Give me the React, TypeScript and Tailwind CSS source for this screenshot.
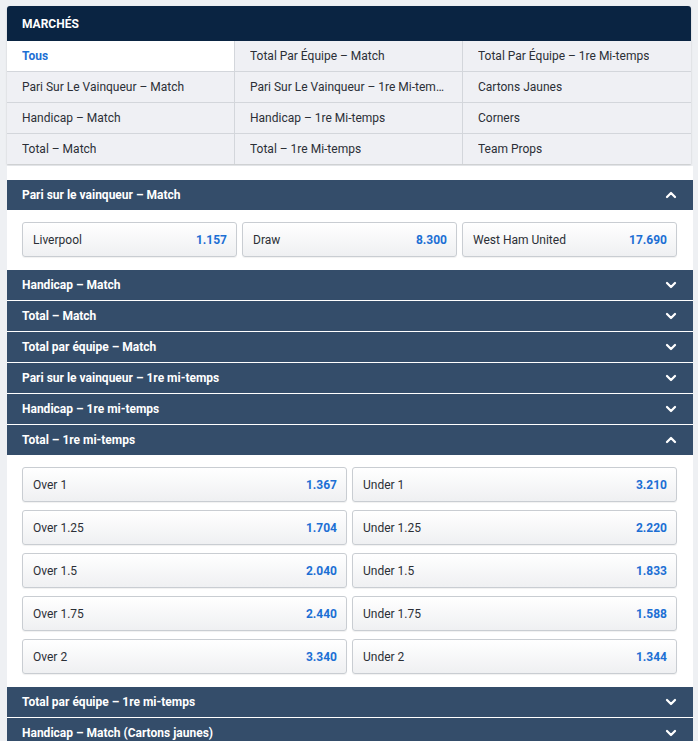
import React from 'react';
import { ChevronDown, ChevronUp } from 'lucide-react';

const marketTabs = [
  ['Tous', 'Total Par Équipe – Match', 'Total Par Équipe – 1re Mi-temps'],
  ['Pari Sur Le Vainqueur – Match', 'Pari Sur Le Vainqueur – 1re Mi-temps', 'Cartons Jaunes'],
  ['Handicap – Match', 'Handicap – 1re Mi-temps', 'Corners'],
  ['Total – Match', 'Total – 1re Mi-temps', 'Team Props'],
];

type Odd = { label: string; price: string };

interface Section {
  title: string;
  open?: boolean;
  cols?: 2 | 3;
  odds?: Odd[];
}

const sections: Section[] = [
  {
    title: 'Pari sur le vainqueur – Match',
    open: true,
    cols: 3,
    odds: [
      { label: 'Liverpool', price: '1.157' },
      { label: 'Draw', price: '8.300' },
      { label: 'West Ham United', price: '17.690' },
    ],
  },
  { title: 'Handicap – Match' },
  { title: 'Total – Match' },
  { title: 'Total par équipe – Match' },
  { title: 'Pari sur le vainqueur – 1re mi-temps' },
  { title: 'Handicap – 1re mi-temps' },
  {
    title: 'Total – 1re mi-temps',
    open: true,
    cols: 2,
    odds: [
      { label: 'Over 1', price: '1.367' },
      { label: 'Under 1', price: '3.210' },
      { label: 'Over 1.25', price: '1.704' },
      { label: 'Under 1.25', price: '2.220' },
      { label: 'Over 1.5', price: '2.040' },
      { label: 'Under 1.5', price: '1.833' },
      { label: 'Over 1.75', price: '2.440' },
      { label: 'Under 1.75', price: '1.588' },
      { label: 'Over 2', price: '3.340' },
      { label: 'Under 2', price: '1.344' },
    ],
  },
  { title: 'Total par équipe – 1re mi-temps' },
  { title: 'Handicap – Match (Cartons jaunes)' },
];

const OddButton = ({ odd }: { odd: Odd }) => (
  <button className="flex h-[35px] items-center justify-between rounded-[3px] border border-[#c9cdd2] bg-gradient-to-b from-white to-[#eff0f2] pl-[10px] pr-[9px] text-[12px] shadow-[0_1px_1px_rgba(0,0,0,0.06)]">
    <span className="text-[#2b2f36]">{odd.label}</span>
    <span className="font-bold text-[#1c6fd4]">{odd.price}</span>
  </button>
);

export default function App() {
  return (
    <div className="min-h-[741px] bg-[#eef0f3] pt-[6px] font-['Roboto',sans-serif]">
      {/* Markets menu */}
      <div className="mx-[7px] overflow-hidden rounded-t-[3px] shadow-[0_1px_2px_rgba(0,0,0,0.18)]">
        <div className="flex h-[35px] items-center bg-[#0a2442] px-[15px] text-[12px] font-bold text-white">
          MARCHÉS
        </div>
        <div className="grid grid-cols-3 bg-[#eff0f4]">
          {marketTabs.flat().map((name, i) => {
            const active = i === 0;
            return (
              <div
                key={name}
                className={`flex items-center truncate border-[#d3d6db] px-[15px] text-[12px] ${
                  i % 3 !== 2 ? 'border-r' : ''
                } ${i < 9 ? 'h-[31px] border-b' : 'h-[30px]'} ${
                  active ? 'bg-white font-bold text-[#1c6fd4]' : 'text-[#2b2f36]'
                }`}
              >
                <span className="truncate">{name}</span>
              </div>
            );
          })}
        </div>
      </div>

      {/* Markets list */}
      <div className="ml-[7px] mr-[5px] mt-[2px] bg-white pt-[14px]">
        {sections.map((s) => (
          <div key={s.title}>
            <div className="flex h-[31px] items-center justify-between border-b border-white bg-[#344d6a] pl-[15px] pr-[14px] text-[12px] font-bold text-white">
              <span>{s.title}</span>
              {s.open ? (
                <ChevronUp size={16} strokeWidth={3.4} />
              ) : (
                <ChevronDown size={16} strokeWidth={3.4} />
              )}
            </div>
            {s.open && s.odds && (
              <div
                className={`grid pb-[13px] pl-[15px] pr-[16px] pt-[11px] ${
                  s.cols === 3 ? 'grid-cols-3 gap-[5px]' : 'grid-cols-2 gap-x-[5px] gap-y-[8px]'
                }`}
              >
                {s.odds.map((o) => (
                  <OddButton key={o.label} odd={o} />
                ))}
              </div>
            )}
          </div>
        ))}
      </div>
    </div>
  );
}
